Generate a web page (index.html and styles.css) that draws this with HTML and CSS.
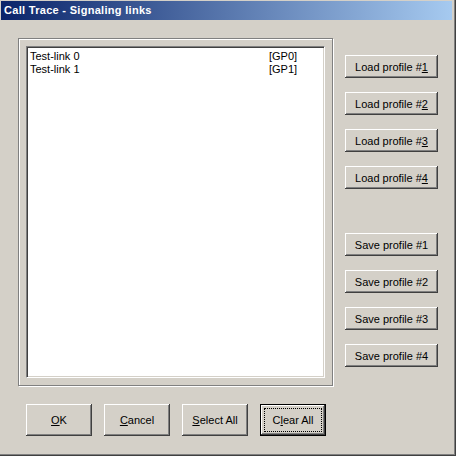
FILE: index.html
```html
<!DOCTYPE html>
<html>
<head>
<meta charset="utf-8">
<link rel="stylesheet" href="styles.css">
</head>
<body>
<div class="window">
  <div class="titlebar">Call Trace - Signaling links</div>
  <div class="client">
    <div class="main">
      <div class="group">
        <div class="listbox">
          <div class="item"><span>Test-link 0</span><span>[GP0]</span></div>
          <div class="item"><span>Test-link 1</span><span>[GP1]</span></div>
        </div>
      </div>
      <div class="side">
        <div class="stack">
          <button class="btn side-btn">Load profile #<u>1</u></button>
          <button class="btn side-btn">Load profile #<u>2</u></button>
          <button class="btn side-btn">Load profile #<u>3</u></button>
          <button class="btn side-btn">Load profile #<u>4</u></button>
        </div>
        <div class="stack save">
          <button class="btn side-btn">Save profile #1</button>
          <button class="btn side-btn">Save profile #2</button>
          <button class="btn side-btn">Save profile #3</button>
          <button class="btn side-btn">Save profile #4</button>
        </div>
      </div>
    </div>
    <div class="bottom">
      <button class="btn big-btn"><u>O</u>K</button>
      <button class="btn big-btn"><u>C</u>ancel</button>
      <button class="btn big-btn"><u>S</u>elect All</button>
      <button class="btn big-btn default">C<u>l</u>ear All</button>
    </div>
  </div>
</div>
</body>
</html>
```

FILE: styles.css
```css
html, body {
  margin: 0;
  padding: 0;
  background: #d4d0c8;
}
.window {
  width: 456px;
  height: 456px;
  box-sizing: border-box;
  padding: 1px 4px 4px 1px;
  background: #d4d0c8;
  box-shadow: inset -1px -1px #404040, inset -2px -2px #808080;
  font-family: "Liberation Sans", Arial, sans-serif;
  font-size: 11px;
  color: #000;
}
.titlebar {
  height: 19px;
  line-height: 19px;
  padding-left: 3px;
  background: linear-gradient(to right, #0a246a, #a6caf0);
  color: #fff;
  font-weight: bold;
  font-size: 11px;
  letter-spacing: 0.3px;
}
.client {
  padding: 18px 0 0 17px;
}
.main {
  display: flex;
}
.group {
  width: 315px;
  height: 348px;
  box-sizing: border-box;
  border: 1px solid #808080;
  box-shadow: inset 1px 1px #fff, 1px 1px #fff;
  padding: 7px 0 0 7px;
}
.listbox {
  width: 299px;
  height: 332px;
  box-sizing: border-box;
  background: #fff;
  border: 1px solid;
  border-color: #808080 #fff #fff #808080;
  box-shadow: inset 1px 1px #404040, inset -1px -1px #d4d0c8;
  padding: 2px 2px 0 2px;
}
.item {
  display: grid;
  grid-template-columns: 239px auto;
  height: 13px;
  line-height: 13px;
  padding-left: 1px;
  padding-top: 1px;
  margin-bottom: -1px;
}
.side {
  display: flex;
  flex-direction: column;
  margin-left: 12px;
  padding-top: 17px;
}
.stack {
  display: flex;
  flex-direction: column;
  gap: 14px;
}
.save {
  margin-top: 44px;
}
.btn {
  box-sizing: border-box;
  margin: 0;
  padding: 0;
  border: none;
  background: #d4d0c8;
  box-shadow: inset -1px -1px #404040, inset 1px 1px #fff, inset -2px -2px #808080;
  font-family: "Liberation Sans", Arial, sans-serif;
  font-size: 11px;
  color: #000;
  text-align: center;
}
.side-btn {
  width: 93px;
  height: 23px;
}
.bottom {
  display: flex;
  gap: 12px;
  margin: 18px 0 0 8px;
}
.big-btn {
  width: 66px;
  height: 32px;
}
.default {
  border: 1px solid #000;
  outline: 1px dotted #000;
  outline-offset: -5px;
}
```
